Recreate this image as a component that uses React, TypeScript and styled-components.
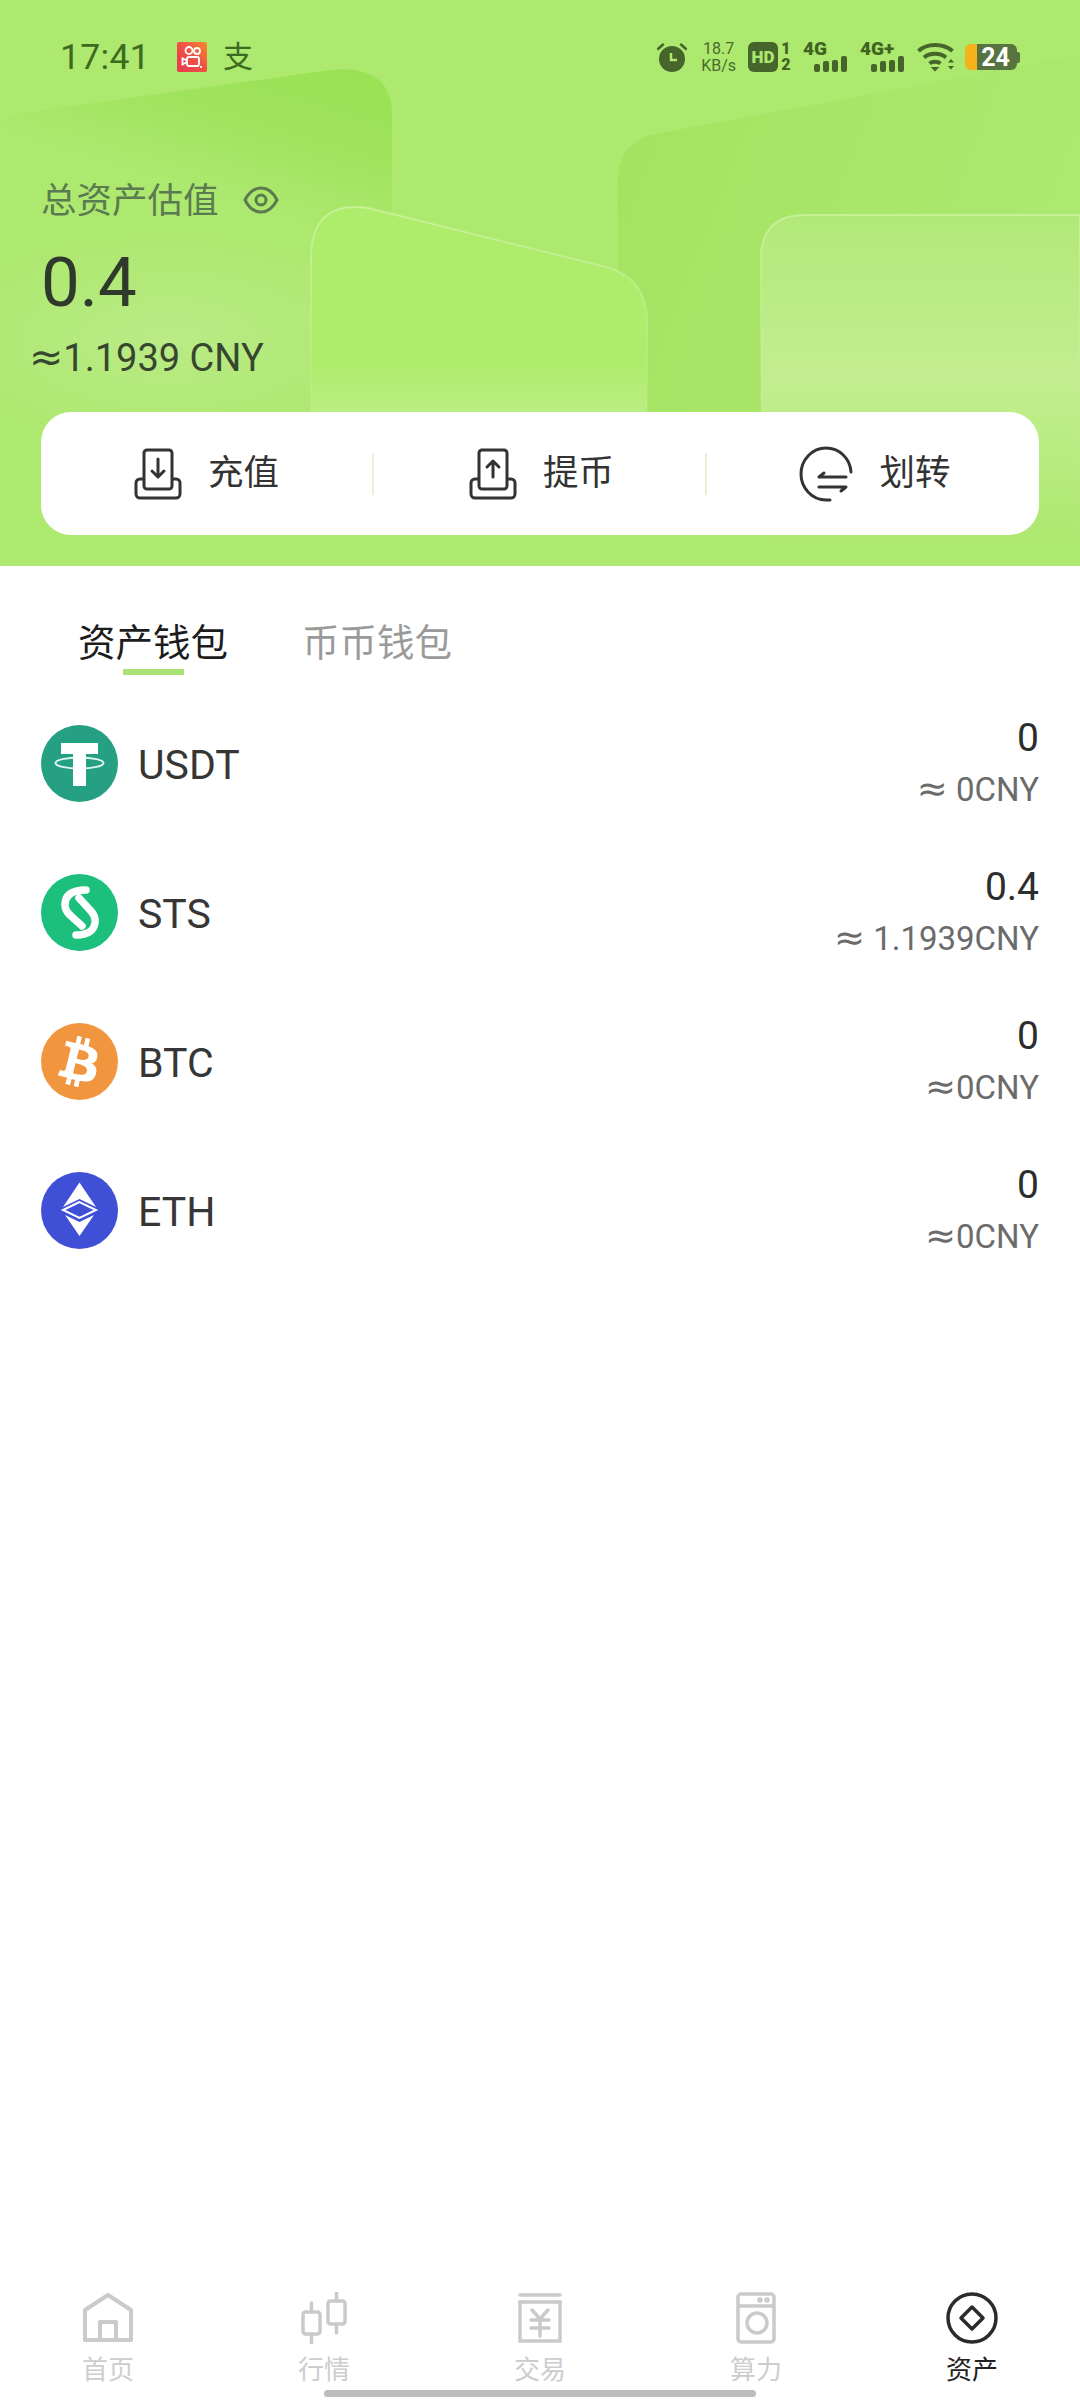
import React from "react";
import styled, { createGlobalStyle } from "styled-components";
import { FaBtc } from "react-icons/fa";

const FONT = `Roboto, "Noto Sans CJK SC", "Noto Sans", sans-serif`;

const Global = createGlobalStyle`
  html, body { margin: 0; padding: 0; background: #fff; }
  body { font-family: ${FONT}; }
  #root { width: 1080px; height: 2400px; }
`;

const Page = styled.div`
  position: relative;
  display: flex;
  flex-direction: column;
  width: 1080px;
  height: 2400px;
  overflow: hidden;
  background: #fff;
`;

const Hero = styled.header`
  position: relative;
  flex: none;
  display: flex;
  flex-direction: column;
  height: 566px;
  padding: 0 41px;
  box-sizing: border-box;
  background: #ade86f;
`;

const HeroArt = styled.svg`
  position: absolute;
  left: 0;
  top: 0;
  width: 1080px;
  height: 566px;
`;

const StatusBar = styled.div`
  position: relative;
  display: flex;
  align-items: center;
  justify-content: space-between;
  height: 114px;
  margin: 0 -41px;
  padding: 0 60px;
  color: #3f6422;
`;

const StatusGroup = styled.div`
  display: flex;
  align-items: center;
`;

const Clock = styled.span`
  font-size: 35.5px;
  letter-spacing: 0.3px;
  color: #3c6a1e;
  margin-right: 27px;
`;

const AlipayMark = styled.span`
  font-size: 30px;
  line-height: 30px;
  margin-left: 16px;
  color: #3c6a1e;
`;

const NetSpeed = styled.span`
  display: flex;
  flex-direction: column;
  align-items: center;
  margin: 0 12px 0 14px;
  font-size: 16px;
  line-height: 17px;
  color: #4a6b2c;
`;

const HdBadge = styled.span`
  display: flex;
  align-items: center;
  justify-content: center;
  width: 30px;
  height: 30px;
  border-radius: 6px;
  background: #46652a;
  color: #ade86f;
  font-size: 17px;
  font-weight: 900;
`;

const SimStack = styled.span`
  display: flex;
  flex-direction: column;
  align-items: center;
  margin: 0 12px 0 3px;
  width: 10px;
  font-size: 16px;
  line-height: 16px;
  font-weight: 900;
`;

const Signal = styled.span`
  position: relative;
  display: block;
  width: 44px;
  height: 30px;
  margin-right: 13px;
`;

const SignalLabel = styled.span`
  position: absolute;
  left: 0;
  top: -3px;
  font-size: 19px;
  line-height: 20px;
  font-weight: 900;
`;

const SignalBars = styled.span`
  position: absolute;
  right: 0;
  bottom: 0;
  display: flex;
  align-items: flex-end;
  gap: 3px;
`;

const SignalBar = styled.i<{ $h: number }>`
  display: block;
  width: 6px;
  height: ${(p) => p.$h}px;
  border-radius: 2px;
  background: #46652a;
`;

const Battery = styled.span`
  position: relative;
  display: flex;
  align-items: center;
  justify-content: center;
  width: 52px;
  height: 26px;
  margin-left: 10px;
  border-radius: 6px;
  overflow: hidden;
  background: linear-gradient(90deg, #f5b21b 0 12px, #57733f 12px);
  color: #fff;
  font-size: 25px;
  font-weight: 700;
  padding-left: 9px;
  box-sizing: border-box;
`;

const BatteryTip = styled.i`
  display: block;
  width: 3px;
  height: 11px;
  border-radius: 0 2px 2px 0;
  background: #57733f;
`;

const BalanceLabel = styled.div`
  position: relative;
  display: flex;
  align-items: center;
  gap: 24px;
  height: 46px;
  margin-top: 63px;
  font-size: 35.5px;
  color: #5a7a50;
`;

const BalanceLabelText = styled.span`
  padding-bottom: 6px;
`;

const BalanceValue = styled.div`
  position: relative;
  height: 80px;
  margin-top: 20px;
  font-size: 69px;
  line-height: 80px;
  color: #2f3a2c;
`;

const BalanceFiat = styled.div`
  position: relative;
  height: 44px;
  margin: 12px 0 0 -12px;
  font-size: 38px;
  line-height: 44px;
  color: #37472f;
`;

/* The approximation sign is set wider than Roboto's own glyph. */
const Approx = styled.span<{ $size: number }>`
  font-family: "DejaVu Sans", sans-serif;
  font-size: ${(p) => p.$size}px;
  font-weight: 400;
`;

const ActionCard = styled.nav`
  position: relative;
  display: grid;
  grid-template-columns: 331px 333px 334px;
  align-items: center;
  height: 123px;
  margin-top: 33px;
  border-radius: 30px;
  background: #fff;
`;

const ActionItem = styled.div<{ $divided?: boolean }>`
  display: flex;
  align-items: center;
  justify-content: center;
  gap: 26px;
  height: 42px;
  padding-left: ${(p) => (p.$divided ? "4px" : "0")};
  font-size: 35.5px;
  line-height: 38px;
  color: #333;
  border-left: ${(p) => (p.$divided ? "2px solid #e6f3d4" : "none")};
`;

const ActionText = styled.span`
  padding-bottom: 2px;
`;

const Tabs = styled.div`
  flex: none;
  display: flex;
  gap: 74px;
  height: 122px;
  padding: 54px 0 0 78px;
  box-sizing: border-box;
`;

const Tab = styled.div<{ $active?: boolean }>`
  display: flex;
  flex-direction: column;
  align-items: center;
  font-size: 37.5px;
  line-height: 46px;
  color: ${(p) => (p.$active ? "#1c1c1c" : "#9a9a9a")};
`;

const TabMark = styled.i`
  display: block;
  width: 61px;
  height: 6px;
  margin-top: 3px;
  background: #a9e273;
`;

const CoinList = styled.section`
  flex: 1;
  display: flex;
  flex-direction: column;
  padding: 1px 41px 0;
`;

const CoinRow = styled.div`
  display: flex;
  align-items: center;
  justify-content: space-between;
  height: 149px;
  flex: none;
`;

const CoinName = styled.div`
  display: flex;
  align-items: center;
  gap: 20px;
`;

const CoinLabel = styled.span`
  padding-top: 3px;
  font-size: 41px;
  color: #363636;
`;

const CoinAmounts = styled.div`
  display: flex;
  flex-direction: column;
  align-items: flex-end;
`;

const Amount = styled.span`
  font-size: 39px;
  line-height: 50px;
  color: #2d2d2d;
`;

const Fiat = styled.span`
  padding-top: 1px;
  font-size: 33px;
  line-height: 50px;
  color: #6b6b6b;
`;

const TabBar = styled.footer`
  flex: none;
  display: grid;
  grid-template-columns: repeat(5, 1fr);
  height: 128px;
  padding-top: 20px;
  box-sizing: border-box;
`;

const TabBarItem = styled.div<{ $active?: boolean }>`
  display: flex;
  flex-direction: column;
  align-items: center;
  font-size: 26px;
  line-height: 30px;
  color: ${(p) => (p.$active ? "#222" : "#cdcdcd")};
`;

const TabBarGlyph = styled.span`
  display: flex;
  align-items: center;
  justify-content: center;
  height: 52px;
  margin-bottom: 11px;
`;

const HomeIndicator = styled.i`
  position: absolute;
  left: 324px;
  bottom: 3px;
  width: 432px;
  height: 7px;
  border-radius: 4px;
  background: #bdbdbd;
`;

const Coin = styled.svg`
  display: block;
  width: 77px;
  height: 77px;
  flex: none;
`;

const CoinDisc = styled.div<{ $bg: string }>`
  display: flex;
  align-items: center;
  justify-content: center;
  width: 77px;
  height: 77px;
  border-radius: 50%;
  background: ${(p) => p.$bg};
  color: #fff;
  flex: none;

  svg {
    transform: rotate(14deg);
  }
`;

/* Tray with a phone dropping into it; the arrow direction is the only difference. */
const TrayIcon = ({ up }: { up?: boolean }) => (
  <svg width="48" height="52" viewBox="0 0 48 52" fill="none" stroke="#333" strokeWidth="3" strokeLinecap="round" strokeLinejoin="round">
    <path d="M10 31H6a4 4 0 0 0-4 4v11a4 4 0 0 0 4 4h36a4 4 0 0 0 4-4V35a4 4 0 0 0-4-4h-4" />
    <rect x="10" y="2" width="28" height="39" rx="3" fill="#fff" />
    {up ? <path d="M24 29V13M18 19l6-6 6 6" /> : <path d="M24 11v18M18 23l6 6 6-6" />}
  </svg>
);

const TransferIcon = () => (
  <svg width="54" height="56" viewBox="0 0 54 56" fill="none" stroke="#333" strokeWidth="3" strokeLinecap="round" strokeLinejoin="round">
    <path d="M52 26C51 12 40 2 27 2 13 2 2 14 2 28s11 26 25 26h4" />
    <path d="M25 27l-5 4h27" />
    <path d="M20 41h27l-5 4" />
  </svg>
);

const EyeIcon = () => (
  <svg width="36" height="28" viewBox="0 0 36 28" fill="none" stroke="#5a7a50" strokeWidth="3">
    <path d="M2 14C6 6 12 2 18 2s12 4 16 12c-4 8-10 12-16 12S6 22 2 14Z" />
    <circle cx="18" cy="14" r="5" />
  </svg>
);

const NavHome = () => (
  <svg width="50" height="50" viewBox="0 0 50 50" fill="none" stroke="#cacaca" strokeWidth="4" strokeLinejoin="round">
    <path d="M2 17 25 2l23 15v30H2Z" />
    <path d="M17 47V29h16v18" />
  </svg>
);

const NavCandles = () => (
  <svg width="46" height="52" viewBox="0 0 46 52" fill="none" stroke="#cacaca" strokeWidth="3.5" strokeLinecap="round">
    <rect x="2" y="20" width="17" height="22" rx="2.5" />
    <path d="M10.500 11v9M10.500 42v9" />
    <rect x="27" y="9" width="17" height="23" rx="2.5" />
    <path d="M35.500 1v8M35.500 32v9" />
  </svg>
);

const NavYen = () => (
  <svg width="46" height="50" viewBox="0 0 46 50" fill="none" stroke="#cacaca" strokeWidth="3.5" strokeLinecap="round">
    <path d="M3 2h40" />
    <path d="M3 9h40v39H3Z" />
    <path d="M15 17l8 9 8-9M14 27h18M14 35h18M23 26v17" />
  </svg>
);

const NavWasher = () => (
  <svg width="40" height="52" viewBox="0 0 40 52" fill="none" stroke="#cacaca" strokeWidth="3.5">
    <rect x="2" y="2" width="36" height="48" rx="3" />
    <path d="M2 14h36" />
    <circle cx="21" cy="31" r="10" />
    <circle cx="24" cy="8" r="1" fill="#cacaca" />
    <circle cx="31" cy="8" r="1" fill="#cacaca" />
  </svg>
);

const NavAssets = () => (
  <svg width="52" height="52" viewBox="0 0 52 52" fill="none" stroke="#2b2b2b" strokeWidth="3.5" strokeLinejoin="round">
    <circle cx="26" cy="26" r="24" />
    <path d="M26 15 37 26 26 37 15 26Z" />
  </svg>
);

const UsdtCoin = () => (
  <Coin viewBox="0 0 77 77">
    <circle cx="38.500" cy="38.500" r="38.500" fill="#26a082" />
    <ellipse cx="38.500" cy="38" rx="24" ry="5.500" fill="none" stroke="#dff5ee" strokeWidth="2" />
    <path d="M20 18h37v11H45v32H32V29H20Z" fill="#fff" />
  </Coin>
);

const StsCoin = () => (
  <Coin viewBox="0 0 77 77">
    <circle cx="38.500" cy="38.500" r="38.500" fill="#1dbf7c" />
    <g fill="none" stroke="#fff" strokeWidth="7.500" strokeLinecap="round">
      <path d="M45 16Q24 16 24 31q0 6 6 11l11 10" />
      <path d="M38 24 49 36q6 6 5 13-2 12-19 12" />
    </g>
  </Coin>
);

const EthCoin = () => (
  <Coin viewBox="0 0 77 77">
    <circle cx="38.500" cy="38.500" r="38.500" fill="#3f4fd6" />
    <path d="M38.500 10.500 22 35l16.500-8L55 35Z" fill="#fff" />
    <path d="M38.500 30 22 38l16.500 8L55 38Z" fill="none" stroke="#fff" strokeWidth="2" />
    <path d="M24 43l14.500 21L53 43l-14.500 7Z" fill="#fff" />
  </Coin>
);

const BtcCoin = () => (
  <CoinDisc $bg="#f2953f">
    <FaBtc size={50} />
  </CoinDisc>
);

const KuaishouIcon = () => (
  <svg width="30" height="30" viewBox="0 0 30 30">
    <defs>
      <linearGradient id="ksFill" x1="1" y1="0" x2="0" y2="1">
        <stop offset="0" stopColor="#f58a2c" />
        <stop offset="0.5" stopColor="#ef4f46" />
        <stop offset="1" stopColor="#e8394f" />
      </linearGradient>
    </defs>
    <rect width="30" height="30" rx="2" fill="url(#ksFill)" />
    <g fill="none" stroke="#fff" strokeWidth="1.800">
      <circle cx="12" cy="8.500" r="3.500" />
      <circle cx="20" cy="9" r="3" />
      <rect x="10" y="15" width="12" height="9" rx="2" />
      <path d="M10 20 5.500 22.500v-6L10 18.500" />
      <path d="M24 24v2" />
    </g>
  </svg>
);

const AlarmIcon = () => (
  <svg width="30" height="30" viewBox="0 0 30 30">
    <circle cx="15" cy="17" r="13" fill="#46652a" />
    <path d="M1 7l5-4.500M29 7l-5-4.500" stroke="#46652a" strokeWidth="2.500" strokeLinecap="round" />
    <path d="M14 11v7h6" fill="none" stroke="#ade86f" strokeWidth="2.500" />
  </svg>
);

const WifiIcon = () => (
  <svg width="38" height="30" viewBox="0 0 38 30" fill="none" stroke="#46652a" strokeWidth="4">
    <path d="M1.500 9C10 1 26 1 35.500 9" />
    <path d="M7 15.500c6-5 16-5 22 0" />
    <path d="M12.500 21.500c3-2.500 8-2.500 11 0" />
    <path d="M13.500 25h9l-4.500 4.500Z" fill="#46652a" stroke="none" />
    <path d="M31 20.500l3-3.500 3 3.500ZM31 24l3 3.500 3-3.500Z" fill="#46652a" stroke="none" />
  </svg>
);

const SignalIndicator = ({ label }: { label: string }) => (
  <Signal>
    <SignalLabel>{label}</SignalLabel>
    <SignalBars>
      <SignalBar $h={8} />
      <SignalBar $h={11} />
      <SignalBar $h={12} />
      <SignalBar $h={16} />
    </SignalBars>
  </Signal>
);

const coins = [
  { name: "USDT", icon: <UsdtCoin />, amount: "0", fiat: " 0CNY" },
  { name: "STS", icon: <StsCoin />, amount: "0.4", fiat: " 1.1939CNY" },
  { name: "BTC", icon: <BtcCoin />, amount: "0", fiat: "0CNY" },
  { name: "ETH", icon: <EthCoin />, amount: "0", fiat: "0CNY" },
];

const nav = [
  { label: "首页", icon: <NavHome /> },
  { label: "行情", icon: <NavCandles /> },
  { label: "交易", icon: <NavYen /> },
  { label: "算力", icon: <NavWasher /> },
  { label: "资产", icon: <NavAssets />, active: true },
];

export default function App() {
  return (
    <Page>
      <Global />
      <Hero>
        <HeroArt viewBox="0 0 1080 566" aria-hidden="true">
          <defs>
            <linearGradient id="backLeft" gradientUnits="userSpaceOnUse" x1="390" y1="70" x2="340" y2="235">
              <stop offset="0" stopColor="#98e152" stopOpacity="0.95" />
              <stop offset="0.5" stopColor="#98e152" stopOpacity="0.65" />
              <stop offset="1" stopColor="#98e152" stopOpacity="0" />
            </linearGradient>
            <linearGradient id="backRight" x1="0" y1="0" x2="1" y2="0.3">
              <stop offset="0" stopColor="#a2e25e" stopOpacity="0.9" />
              <stop offset="1" stopColor="#a2e25e" stopOpacity="0" />
            </linearGradient>
            <linearGradient id="glassA" x1="0" y1="0" x2="0" y2="1">
              <stop offset="0" stopColor="#aeec6b" />
              <stop offset="0.72" stopColor="#aeec6b" />
              <stop offset="1" stopColor="#bdee85" />
            </linearGradient>
            <linearGradient id="glassB" gradientUnits="userSpaceOnUse" x1="0" y1="215" x2="0" y2="540">
              <stop offset="0" stopColor="#b2e879" />
              <stop offset="0.5" stopColor="#c3ee90" />
              <stop offset="1" stopColor="#ade86f" />
            </linearGradient>
            <linearGradient id="edge" gradientUnits="userSpaceOnUse" x1="0" y1="205" x2="0" y2="420">
              <stop offset="0" stopColor="#cdf2a0" stopOpacity="0.8" />
              <stop offset="1" stopColor="#cdf2a0" stopOpacity="0.1" />
            </linearGradient>
            <radialGradient id="haze" cx="0.5" cy="0.5" r="0.5">
              <stop offset="0" stopColor="#c0ec90" stopOpacity="0.7" />
              <stop offset="1" stopColor="#c0ec90" stopOpacity="0" />
            </radialGradient>
          </defs>
          <ellipse cx="170" cy="340" rx="240" ry="110" fill="url(#haze)" />
          <path d="M0 122Q0 118 30 112L330 70Q390 64 392 112V300L0 270Z" fill="url(#backLeft)" />
          <path d="M618 175Q620 145 650 135L1080 55V420H618Z" fill="url(#backRight)" />
          <path
            d="M311 420V255Q313 200 368 208L610 268Q646 280 647 320V420Z"
            fill="url(#glassA)"
            stroke="url(#edge)"
            strokeWidth="2"
          />
          <path d="M761 540V255Q763 215 805 215H1080V540Z" fill="url(#glassB)" stroke="url(#edge)" strokeWidth="2" />
        </HeroArt>

        <StatusBar>
          <StatusGroup>
            <Clock>17:41</Clock>
            <KuaishouIcon />
            <AlipayMark>支</AlipayMark>
          </StatusGroup>
          <StatusGroup>
            <AlarmIcon />
            <NetSpeed>
              <span>18.7</span>
              <span>KB/s</span>
            </NetSpeed>
            <HdBadge>HD</HdBadge>
            <SimStack>
              <span>1</span>
              <span>2</span>
            </SimStack>
            <SignalIndicator label="4G" />
            <SignalIndicator label="4G+" />
            <WifiIcon />
            <Battery>24</Battery>
            <BatteryTip />
          </StatusGroup>
        </StatusBar>

        <BalanceLabel>
          <BalanceLabelText>总资产估值</BalanceLabelText>
          <EyeIcon />
        </BalanceLabel>
        <BalanceValue>0.4</BalanceValue>
        <BalanceFiat>
          <Approx $size={41}>≈</Approx>1.1939 CNY
        </BalanceFiat>

        <ActionCard>
          <ActionItem>
            <TrayIcon />
            <ActionText>充值</ActionText>
          </ActionItem>
          <ActionItem $divided>
            <TrayIcon up />
            <ActionText>提币</ActionText>
          </ActionItem>
          <ActionItem $divided>
            <TransferIcon />
            <ActionText>划转</ActionText>
          </ActionItem>
        </ActionCard>
      </Hero>

      <Tabs>
        <Tab $active>
          资产钱包
          <TabMark />
        </Tab>
        <Tab>币币钱包</Tab>
      </Tabs>

      <CoinList>
        {coins.map((c) => (
          <CoinRow key={c.name}>
            <CoinName>
              {c.icon}
              <CoinLabel>{c.name}</CoinLabel>
            </CoinName>
            <CoinAmounts>
              <Amount>{c.amount}</Amount>
              <Fiat>
                <Approx $size={37}>≈</Approx>
                {c.fiat}
              </Fiat>
            </CoinAmounts>
          </CoinRow>
        ))}
      </CoinList>

      <TabBar>
        {nav.map((n) => (
          <TabBarItem key={n.label} $active={n.active}>
            <TabBarGlyph>{n.icon}</TabBarGlyph>
            {n.label}
          </TabBarItem>
        ))}
      </TabBar>
      <HomeIndicator />
    </Page>
  );
}
